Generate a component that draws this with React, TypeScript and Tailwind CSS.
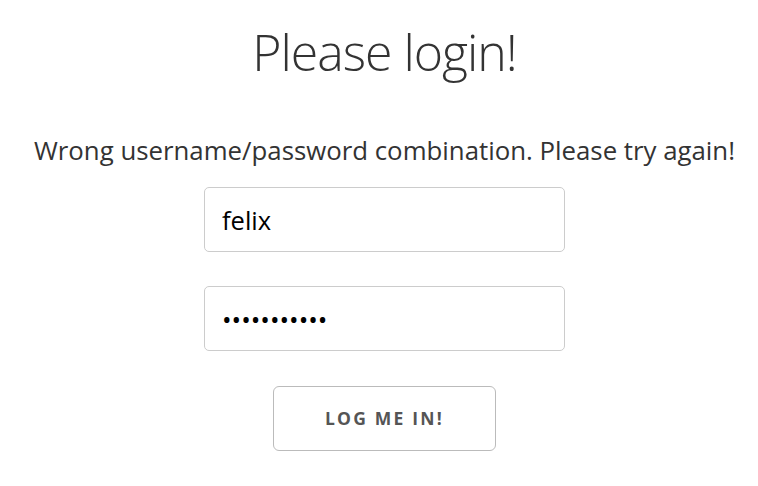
import React from 'react';

function App() {
  return (
    <div className="min-h-screen bg-white flex flex-col items-center pl-[11px] text-[#333]" style={{ fontFamily: '"Open Sans", sans-serif' }}>
      <h1 className="mt-[17px] text-[50px] font-light leading-[70px] tracking-[-1px]">Please login!</h1>
      <p className="mt-[46px] text-[25.8px] leading-[34px]">Wrong username/password combination. Please try again!</p>
      <form className="mt-[20px] flex flex-col items-center" onSubmit={(e) => e.preventDefault()}>
        <input
          type="text"
          defaultValue="felix"
          className="w-[361px] h-[65px] rounded-[5px] border border-[#ccc] px-[17px] text-[25.5px] text-black outline-none"
          style={{ fontFamily: '"Open Sans", sans-serif' }}
        />
        <input
          type="password"
          defaultValue="supersecret"
          className="mt-[34px] w-[361px] h-[65px] rounded-[5px] border border-[#ccc] px-[17px] text-[25.5px] text-black outline-none"
          style={{ fontFamily: '"Open Sans", sans-serif' }}
        />
        <button
          type="submit"
          className="mt-[35px] w-[223px] h-[65px] rounded-[6px] border border-[#bbb] bg-white text-[17.5px] font-bold tracking-[2.2px] text-[#555]"
        >
          LOG ME IN!
        </button>
      </form>
    </div>
  );
}

export default App;
